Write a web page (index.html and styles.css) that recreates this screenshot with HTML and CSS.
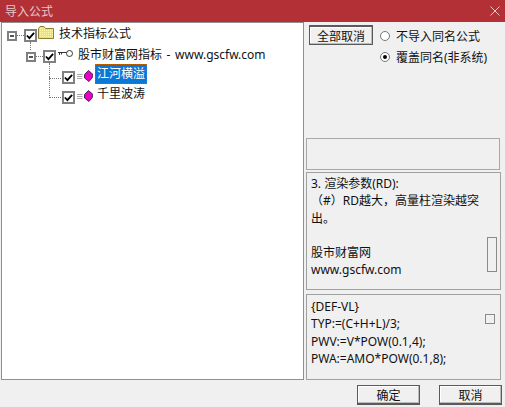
FILE: index.html
```html
<!DOCTYPE html>
<html lang="zh">
<head>
<meta charset="utf-8">
<title>导入公式</title>
<link rel="stylesheet" href="styles.css">
</head>
<body>
<div class="window">
  <header class="titlebar">
    <span class="title">导入公式</span>
    <svg class="close" width="10" height="10" viewBox="0 0 10 10"><path d="M0.5 0.5L9.5 9.5M9.5 0.5L0.5 9.5" stroke="#e8c9ca" fill="none"/></svg>
  </header>
  <main class="content">
    <section class="tree">
      <div class="row level0">
        <span class="expander"></span>
        <span class="dots-h"></span>
        <span class="check"><svg width="10" height="9" viewBox="0 0 10 9"><path d="M1 4.5L3.8 7.5L9 1.5" stroke="#000" stroke-width="2" fill="none"/></svg></span>
        <svg class="icon folder" width="16" height="14" viewBox="0 0 16 14"><defs><pattern id="dither" width="2" height="2" patternUnits="userSpaceOnUse"><rect width="2" height="2" fill="#f0ec30"/><rect width="1" height="1" fill="#fdf9a8"/></pattern></defs><path d="M0.5 12.5V2.5L2 0.5H6L7.5 2.5H15.5V12.5Z" fill="url(#dither)" stroke="#8f7f30"/></svg>
        <span class="label">技术指标公式</span>
      </div>
      <div class="row level1">
        <span class="expander"></span>
        <span class="dots-h"></span>
        <span class="check"><svg width="10" height="9" viewBox="0 0 10 9"><path d="M1 4.5L3.8 7.5L9 1.5" stroke="#000" stroke-width="2" fill="none"/></svg></span>
        <svg class="icon key" width="15" height="8" viewBox="0 0 15 8"><path d="M0 2.5H9M1.5 2.5V5M3.5 2.5V4.5" stroke="#333" fill="none"/><circle cx="11.5" cy="3.5" r="3" fill="#fff" stroke="#333"/></svg>
        <span class="label">股市财富网指标 - www.gscfw.com</span>
      </div>
      <div class="row level2 first">
        <span class="check"><svg width="10" height="9" viewBox="0 0 10 9"><path d="M1 4.5L3.8 7.5L9 1.5" stroke="#000" stroke-width="2" fill="none"/></svg></span>
        <svg class="icon gem" width="16" height="12" viewBox="0 0 16 12"><path d="M0 4.5H5.5M0 6.5H5.5M0 8.5H5.5" stroke="#aaa" fill="none"/><path d="M11.5 0.5L16 4.5L15 8L12 11.5L7.5 8L7.5 4.5Z" fill="#e800c8" stroke="#4a2a50"/></svg>
        <span class="label selected">江河横溢</span>
      </div>
      <div class="row level2">
        <span class="check"><svg width="10" height="9" viewBox="0 0 10 9"><path d="M1 4.5L3.8 7.5L9 1.5" stroke="#000" stroke-width="2" fill="none"/></svg></span>
        <svg class="icon gem" width="16" height="12" viewBox="0 0 16 12"><path d="M0 4.5H5.5M0 6.5H5.5M0 8.5H5.5" stroke="#aaa" fill="none"/><path d="M11.5 0.5L16 4.5L15 8L12 11.5L7.5 8L7.5 4.5Z" fill="#e800c8" stroke="#4a2a50"/></svg>
        <span class="label">千里波涛</span>
      </div>
    </section>
    <aside class="side">
      <div class="options">
        <button class="btn cancel-all">全部取消</button>
        <div class="radios">
          <label class="radio"><span class="dot"></span>不导入同名公式</label>
          <label class="radio"><span class="dot on"></span>覆盖同名(非系统)</label>
        </div>
      </div>
      <div class="blank"></div>
      <div class="box notes">
        <p>3. 渲染参数(RD):</p>
        <p>（#）RD越大，高量柱渲染越突出。</p>
        <p>&nbsp;</p>
        <p>股市财富网</p>
        <p>www.gscfw.com</p>
        <span class="thumb"></span>
      </div>
      <div class="box code">
        <p>{DEF-VL}</p>
        <p>TYP:=(C+H+L)/3;</p>
        <p>PWV:=V*POW(0.1,4);</p>
        <p>PWA:=AMO*POW(0.1,8);</p>
        <span class="square"></span>
      </div>
    </aside>
  </main>
  <footer class="footer">
    <button class="btn action">确定</button>
    <button class="btn action">取消</button>
  </footer>
</div>
</body>
</html>
```
FILE: styles.css
```css
* { box-sizing: border-box; }
html, body { margin: 0; height: 100%; }
body {
  font-family: "Noto Sans", "Noto Sans CJK SC", sans-serif;
  font-size: 12px;
  color: #111;
}
.window {
  width: 505px;
  height: 407px;
  background: #f0f0f0;
  display: flex;
  flex-direction: column;
  overflow: hidden;
}
.titlebar {
  height: 22px;
  background: #b23036;
  color: #e6c8c9;
  display: flex;
  align-items: center;
  justify-content: space-between;
  padding: 0 5px 0 5px;
}
.title { font-size: 12px; }
.content {
  height: 358px;
  display: flex;
  padding-left: 1px;
}
.tree {
  width: 303px;
  height: 358px;
  background: #fff;
  border: 1px solid #8f8f8f;
  padding-top: 2px;
}
.row {
  height: 21px;
  display: flex;
  align-items: center;
  position: relative;
}
.level0 { padding-left: 5px; }
.level1 { padding-left: 24px; }
.level2 { padding-left: 60px; }
.level2 + .level2 { margin-top: -1px; }
.expander {
  width: 10px;
  height: 10px;
  border: 2px solid #808080;
  background: #fff;
  position: relative;
  flex: none;
}
.expander::after {
  content: "";
  position: absolute;
  left: 1px;
  right: 1px;
  top: 2px;
  height: 2px;
  background: #555;
}
.dots-h {
  width: 7px;
  border-top: 1px dotted #777;
  flex: none;
}
.check {
  width: 13px;
  height: 13px;
  border: 2px solid #808080;
  background: #fff;
  display: flex;
  align-items: center;
  justify-content: center;
  flex: none;
}
.icon { flex: none; margin-left: 2px; }
.folder { margin-left: 1px; margin-top: -6px; }
.key { margin-bottom: 6px; }
.gem { margin-bottom: 4px; }
.label {
  margin-left: 5px;
  margin-bottom: 5px;
  white-space: nowrap;
}
.level1 .label { word-spacing: 1.5px; }
.level2 .label { margin-left: 2px; margin-bottom: 8px; padding: 0 2px; line-height: 20px; }
.selected {
  background: #0a78d7;
  color: #fff;
  outline: 1px dotted #c06000;
  outline-offset: -1px;
}
.level0::after {
  content: "";
  position: absolute;
  left: 28px;
  top: 17px;
  height: 8px;
  border-left: 1px dotted #777;
}
.level2::before {
  content: "";
  position: absolute;
  left: 47px;
  top: -10px;
  width: 13px;
  height: 20px;
  border-left: 1px dotted #777;
  border-bottom: 1px dotted #777;
}
.level2.first::before {
  top: -4px;
  height: 15px;
}
.side {
  width: 198px;
  margin-left: 2px;
  display: flex;
  flex-direction: column;
}
.options {
  height: 116px;
  padding: 3px 0 0 3px;
  display: flex;
  gap: 7px;
}
.btn {
  background: #f0f0f0;
  border: 1px solid #5a5a5a;
  box-shadow: inset -1px -1px 0 #bbb, inset 1px 1px 0 #fff;
  font: inherit;
  color: #111;
  padding: 0;
}
.cancel-all { width: 64px; height: 20px; border-width: 2px 1px 1px 1px; }
.radios {
  display: flex;
  flex-direction: column;
  gap: 5px;
  padding-top: 3px;
}
.radio {
  height: 16px;
  display: flex;
  align-items: center;
  gap: 6px;
  white-space: nowrap;
}
.dot {
  width: 10px;
  height: 10px;
  border-radius: 50%;
  background: #fff;
  border: 1px solid #777;
  display: block;
  position: relative;
}
.dot.on::after {
  content: "";
  position: absolute;
  left: 2px;
  top: 2px;
  width: 4px;
  height: 4px;
  border-radius: 50%;
  background: #000;
}
.blank {
  height: 32px;
  width: 194px;
  border: 1px solid #a8a8a8;
  margin-bottom: 2px;
}
.box {
  width: 195px;
  border: 1px solid #a0a0a0;
  padding: 2px 15px 0 4px;
  position: relative;
  line-height: 17.3px;
}
.box p { margin: 0; }
.notes { height: 118px; margin-bottom: 4px; }
.code { height: 86px; padding-top: 3px; }
.thumb {
  position: absolute;
  left: 180px;
  top: 64px;
  width: 10px;
  height: 35px;
  border: 1px solid #8a8a8a;
}
.square {
  position: absolute;
  left: 178px;
  top: 19px;
  width: 10px;
  height: 10px;
  border: 1px solid #8a8a8a;
}
.footer {
  flex: 1;
  display: flex;
  justify-content: flex-end;
  gap: 19px;
  padding: 5px 3px 2px 0;
}
.action { width: 63px; height: 20px; border-width: 1px 1px 2px 1px; }
```
